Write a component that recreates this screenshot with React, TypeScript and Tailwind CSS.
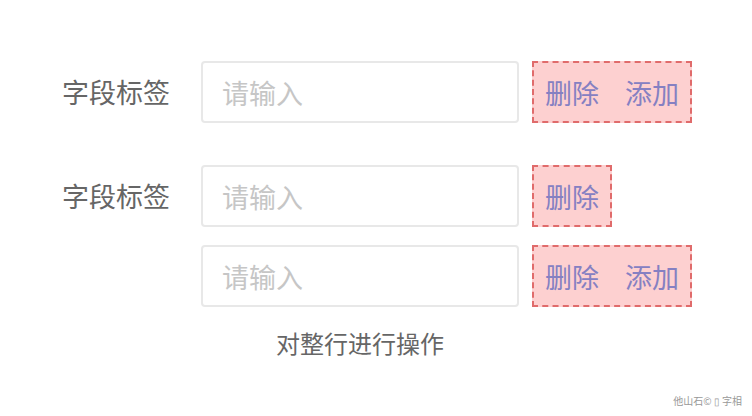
const font = { fontFamily: '"Noto Sans CJK SC", "Noto Sans", sans-serif' };

function Actions({ add = true }: { add?: boolean }) {
  return (
    <div className="flex h-[62px] items-center border-2 border-dashed border-[#e06b6b] bg-[#fdd0d0] px-[9px]">
      <button className="px-[2px] text-[27px] leading-none text-[#8580c2]">删除</button>
      {add && <button className="ml-[22px] px-[2px] text-[27px] leading-none text-[#8580c2]">添加</button>}
    </div>
  );
}

function Field() {
  return (
    <input
      type="text"
      placeholder="请输入"
      className="h-[62px] w-[318px] rounded-[4px] border-2 border-[#e8e8e8] bg-white px-[19px] text-[27px] text-[#333] outline-none placeholder:text-[#c6c6c6]"
    />
  );
}

export default function App() {
  return (
    <div className="relative h-[416px] w-[752px] bg-white" style={font}>
      <div className="flex flex-col pl-[62px] pt-[61px]">
        <div className="flex items-start">
          <label className="flex h-[62px] w-[139px] items-center text-[27px] text-[#666]">字段标签</label>
          <div className="flex gap-[13px]">
            <Field />
            <Actions />
          </div>
        </div>

        <div className="mt-[42px] flex items-start">
          <label className="flex h-[62px] w-[139px] items-center text-[27px] text-[#666]">字段标签</label>
          <div className="flex flex-col gap-[18px]">
            <div className="flex items-start gap-[13px]">
              <Field />
              <Actions add={false} />
            </div>
            <div className="flex gap-[13px]">
              <Field />
              <Actions />
            </div>
            <div className="w-[318px] text-center text-[24px] leading-[36px] text-[#666]">对整行进行操作</div>
          </div>
        </div>
      </div>

      <div className="absolute bottom-[8px] right-[10px] text-[10px] text-[#999]">他山石© ▯ 字相</div>
    </div>
  );
}
